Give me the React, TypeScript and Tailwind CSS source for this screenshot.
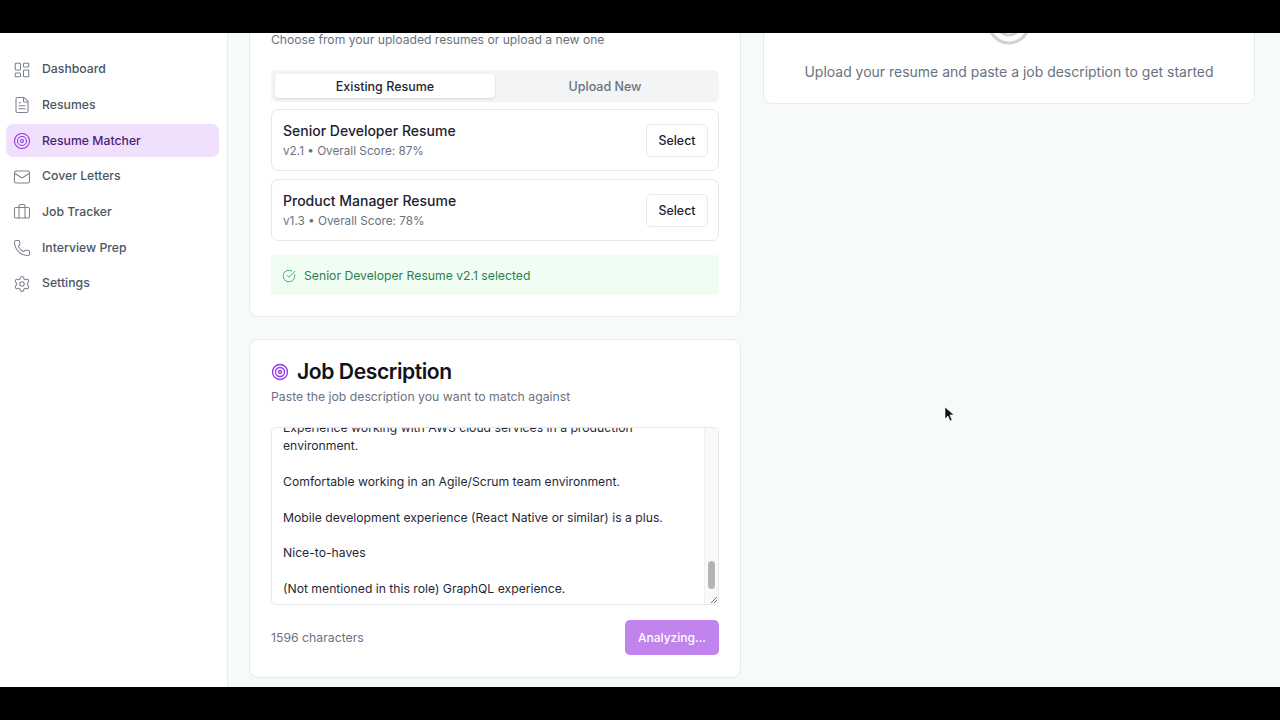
import React from 'react';
import { LayoutDashboard, FileText, Target, Mail, Briefcase, Phone, Settings, CircleCheckBig } from 'lucide-react';

const navItems = [
  { label: 'Dashboard', icon: LayoutDashboard },
  { label: 'Resumes', icon: FileText },
  { label: 'Resume Matcher', icon: Target, active: true },
  { label: 'Cover Letters', icon: Mail },
  { label: 'Job Tracker', icon: Briefcase },
  { label: 'Interview Prep', icon: Phone },
  { label: 'Settings', icon: Settings },
];

const resumes = [
  { name: 'Senior Developer Resume', meta: 'v2.1 • Overall Score: 87%' },
  { name: 'Product Manager Resume', meta: 'v1.3 • Overall Score: 78%' },
];

const Sidebar = () => (
  <aside className="w-[228px] shrink-0 bg-white border-r border-[#e9ecef] px-[6px] pt-[20px]">
    <nav className="flex flex-col gap-[2.7px]">
      {navItems.map(({ label, icon: Icon, active }) => (
        <div
          key={label}
          className={`w-[213px] h-[33px] flex items-center gap-[11px] pl-[7px] rounded-[7px] text-[12.25px] font-medium ${active ? 'bg-[#f0e0fb] text-[#4f1d7c]' : 'text-[#4b5563]'}`}
        >
          <Icon className={`w-[18px] h-[18px] shrink-0 ${active ? 'text-[#9333ea]' : 'text-[#7c838d]'}`} strokeWidth={1.4} />
          {label}
        </div>
      ))}
    </nav>
  </aside>
);

const ResumeCard = () => (
  <section className="h-[284px] bg-white rounded-b-[9px] border border-t-0 border-[#e8ebee] px-[21px] pt-[0px]">
    <p className="h-[14px] flex items-center text-[12.15px] text-[#6b7280]">Choose from your uploaded resumes or upload a new one</p>
    <div className="mt-[23px] h-[32px] rounded-[5px] bg-[#f3f4f6] p-[4px] flex text-[12.5px] font-medium">
      <div className="w-[220px] pt-[2px] flex items-center justify-center bg-white rounded-[4px] shadow-sm text-[#1f2937]">Existing Resume</div>
      <div className="flex-1 pt-[2px] flex items-center justify-center text-[#6b7280]">Upload New</div>
    </div>
    <div className="mt-[7px] flex flex-col gap-[8px]">
      {resumes.map((r) => (
        <div key={r.name} className="h-[62px] flex items-center justify-between border border-[#e5e7eb] rounded-[7px] pl-[11px] pr-[10px]">
          <div className="pt-[2px]">
            <div className="text-[14px] leading-[20px] font-medium text-[#1c2230]">{r.name}</div>
            <div className="text-[11.75px] leading-[20px] text-[#6b7280]">{r.meta}</div>
          </div>
          <div className="w-[62px] h-[33px] pt-[2px] flex items-center justify-center bg-white border border-[#e8eaed] rounded-[5px] text-[12.4px] font-medium text-[#1c2230]">Select</div>
        </div>
      ))}
    </div>
    <div className="mt-[14px] h-[40px] pt-[2px] flex items-center gap-[8px] pl-[11px] bg-[#effdf3] rounded-[3px] text-[12.2px] text-[#2f7d52]">
      <CircleCheckBig className="w-[14px] h-[14px] text-[#3aa36b]" strokeWidth={1.5} />
      Senior Developer Resume v2.1 selected
    </div>
  </section>
);

const JobDescriptionCard = () => (
  <section className="mt-[22px] h-[339px] bg-white rounded-[9px] border border-[#e8ebee] px-[21px] pt-[18px]">
    <h2 className="flex items-center gap-[8px] h-[28px] text-[21.1px] font-semibold tracking-[-0.02em] text-[#111318]">
      <Target className="w-[18px] h-[18px] text-[#9333ea]" strokeWidth={1.75} />
      Job Description
    </h2>
    <p className="h-[22px] flex items-center text-[12.25px] text-[#6b7280]">Paste the job description you want to match against</p>
    <div className="relative mt-[19px] h-[178px] overflow-hidden rounded-[5px] border border-[#e5e7eb] text-[12.2px] leading-[17.9px] text-[#1f2937]">
      <div className="mt-[-9px] pl-[11px] pr-[24px]">
        <p>Experience working with AWS cloud services in a production environment.</p>
        <p className="mt-[17.9px]">Comfortable working in an Agile/Scrum team environment.</p>
        <p className="mt-[17.9px]">Mobile development experience (React Native or similar) is a plus.</p>
        <p className="mt-[17.9px]">Nice-to-haves</p>
        <p className="mt-[17.9px]">(Not mentioned in this role) GraphQL experience.</p>
      </div>
      {/* scrollbar */}
      <div className="absolute right-0 top-0 bottom-0 w-[14px] bg-[#fafafa] border-l border-[#efefef]">
        <div className="absolute left-[3px] top-[133px] w-[7px] h-[28px] rounded-full bg-[#b4b4b4]" />
      </div>
      <svg className="absolute right-0 bottom-0 w-[9px] h-[9px]" viewBox="0 0 9 9">
        <path d="M8 2 2 8M8 5 5 8" stroke="#777" strokeWidth="1" />
      </svg>
    </div>
    <div className="mt-[15px] flex items-center justify-between">
      <span className="pt-[1px] text-[12.25px] text-[#6b7280]">1596 characters</span>
      <div className="w-[94px] h-[35px] flex items-center justify-center rounded-[5px] bg-[#c084ec] text-white text-[12px] font-medium">Analyzing...</div>
    </div>
  </section>
);

const ResultsCard = () => (
  <section className="h-[71px] bg-white rounded-b-[9px] border border-t-0 border-[#e8ebee] relative flex justify-center">
    <Target className="absolute left-1/2 -translate-x-1/2 top-[-34px] w-[48px] h-[48px] text-[#cfd2d6]" strokeWidth={1.5} />
    <p className="mt-[30px] h-[18px] flex items-center text-[13.97px] text-[#6b7280]">Upload your resume and paste a job description to get started</p>
  </section>
);

export default function App() {
  return (
    <div className="relative w-[1280px] h-[720px] overflow-hidden bg-black flex flex-col" style={{ fontFamily: 'Inter, "Liberation Sans", sans-serif' }}>
      <div className="h-[33px] shrink-0" />
      <div className="h-[654px] shrink-0 flex overflow-hidden bg-[#f7fafb]">
        <Sidebar />
        <main className="flex-1 flex items-start gap-[22px] pl-[21px] pr-[25px]">
          <div className="w-[492px] shrink-0">
            <ResumeCard />
            <JobDescriptionCard />
          </div>
          <div className="w-[492px] shrink-0">
            <ResultsCard />
          </div>
        </main>
      </div>
      <div className="flex-1" />
      {/* mouse pointer */}
      <svg className="absolute left-[944px] top-[406px] w-[11px] h-[17px]" viewBox="0 0 11 17">
        <path d="M1 1v12l3-3 2 5 2-1-2-5h4z" fill="#111" stroke="#fff" strokeWidth="0.6" />
      </svg>
    </div>
  );
}
